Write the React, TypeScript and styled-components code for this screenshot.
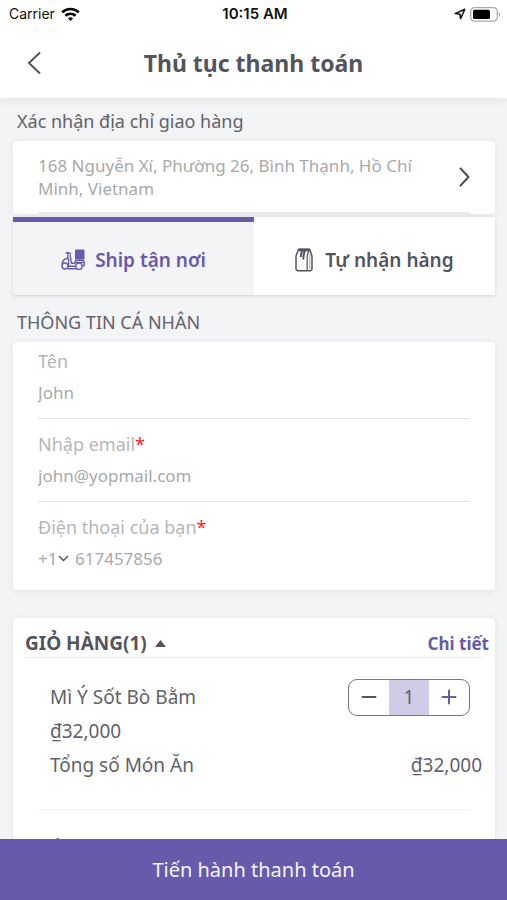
import React, { useState } from "react";
import styled, { createGlobalStyle } from "styled-components";

const color = {
  brand: "#675aac",
  brandSoft: "#d0cbe6",
  page: "#f3f4f6",
  text: "#54545e",
  body: "#626268",
  muted: "#a9a9ab",
  line: "#dedfe1",
};

const GlobalStyle = createGlobalStyle`
  * { box-sizing: border-box; }
  body { margin: 0; background: ${color.page}; }
  body, button, input, select { font-family: "Noto Sans", sans-serif; }
  h1, h2, p { margin: 0; font-weight: 400; }
  button { padding: 0; border: 0; background: none; color: inherit; font: inherit; cursor: pointer; }
  svg { display: block; flex: none; }
`;

const Screen = styled.div`
  display: flex;
  flex-direction: column;
  height: 100vh;
  background: ${color.page};
  color: ${color.text};
`;

const Top = styled.header`
  z-index: 1;
  background: #fff;
  box-shadow: 0 2px 8px rgba(40, 40, 60, 0.08);
`;

const StatusBar = styled.div`
  display: grid;
  grid-template-columns: 1fr auto 1fr;
  align-items: center;
  height: 28px;
  padding: 0 6px 0 9px;
  color: #111;
  font: 500 14px/20px Inter, sans-serif;
`;

const Carrier = styled.span`
  display: flex;
  align-items: center;
  gap: 6px;
  font-weight: 400;
`;

const Clock = styled.time`
  font-size: 15px;
  font-weight: 600;
`;

const StatusIcons = styled.span`
  display: flex;
  align-items: center;
  justify-content: flex-end;
  gap: 4px;
`;

const TitleBar = styled.div`
  display: grid;
  grid-template-columns: 56px 1fr 56px;
  align-items: center;
  height: 70px;
`;

const BackButton = styled.button`
  display: flex;
  padding-left: 27px;
`;

const Title = styled.h1`
  font-size: 23px;
  line-height: 32px;
  font-weight: 700;
  text-align: center;
`;

const Content = styled.main`
  flex: 1;
  min-height: 0;
  overflow-y: auto;
  scrollbar-width: none;
  padding: 0 12px 0 13px;
`;

const SectionTitle = styled.h2`
  padding: 11px 4px 7px;
  color: ${color.body};
  font-size: 18px;
  line-height: 25px;
`;

const Card = styled.section`
  border-radius: 4px;
  background: #fff;
  box-shadow: 0 1px 6px rgba(40, 40, 60, 0.09);
`;

const AddressCard = styled(Card)`
  padding: 0 25px;
`;

const AddressButton = styled.button`
  display: flex;
  align-items: center;
  justify-content: space-between;
  width: 100%;
  padding: 13px 0 12px;
  border-bottom: 2px solid #e9eaeb;
  color: ${color.muted};
  font-size: 17px;
  line-height: 23px;
  text-align: left;
`;

const AddressText = styled.span`
  max-width: 390px;
`;

const Tabs = styled.div`
  display: grid;
  grid-template-columns: 1fr 1fr;
  margin: 3px 0 4px;
  box-shadow: 0 1px 3px rgba(40, 40, 60, 0.16);
`;

const Tab = styled.button<{ $active: boolean }>`
  display: flex;
  align-items: center;
  justify-content: center;
  gap: 10px;
  height: 78px;
  padding-top: 3px;
  border-top: 5px solid ${(p) => (p.$active ? color.brand : "#fff")};
  background: ${(p) => (p.$active ? color.page : "#fff")};
  color: ${(p) => (p.$active ? color.brand : color.text)};
  font-size: 19px;
  line-height: 28px;
  font-weight: 600;
`;

const FormCard = styled(Card)`
  padding: 0 25px;
  margin-bottom: 28px;
`;

const Field = styled.div`
  padding: 7px 0 13px;

  & + & {
    padding-top: 13px;
    border-top: 1px solid ${color.line};
  }
`;

const Label = styled.label`
  display: block;
  color: #b6b6b8;
  font-size: 18px;
  line-height: 25px;
`;

const Required = styled.span`
  color: #ff1a1a;
`;

const Input = styled.input`
  display: block;
  flex: 1;
  width: 100%;
  min-width: 0;
  height: 25px;
  margin-top: 6px;
  padding: 0;
  border: 0;
  outline: 0;
  background: none;
  color: ${color.muted};
  font-size: 17px;
  line-height: 25px;
`;

const PhoneRow = styled.div`
  display: flex;
  align-items: center;
  padding-bottom: 6px;
`;

const CodeBox = styled.span`
  display: flex;
  align-items: center;
  margin: 6px 6px 0 0;
  color: ${color.text};
`;

const CodeSelect = styled.select`
  appearance: none;
  height: 25px;
  padding: 0;
  border: 0;
  background: none;
  color: ${color.muted};
  font-size: 17px;
`;

const CartHead = styled.div`
  display: flex;
  align-items: center;
  justify-content: space-between;
  margin: 0 12px;
  padding-top: 12px;
  border-bottom: 1px solid #ebecee;
`;

const CartToggle = styled.button`
  display: flex;
  align-items: center;
  gap: 8px;
  font-size: 19px;
  line-height: 27px;
  font-weight: 700;
`;

const DetailLink = styled.a`
  margin-right: -6px;
  color: ${color.brand};
  font-size: 17px;
  line-height: 25px;
  font-weight: 700;
  text-decoration: none;
`;

const CartBody = styled.div`
  padding: 22px 13px 20px 25px;
  color: ${color.body};
  font-size: 19px;
  line-height: 34px;
`;

const CartRow = styled.div`
  display: flex;
  align-items: center;
  justify-content: space-between;
  height: 34px;
  padding-left: 12px;
`;

const Stepper = styled.div`
  display: grid;
  grid-template-columns: 40px 40px 40px;
  height: 37px;
  margin-right: 12px;
  overflow: hidden;
  border: 1px solid #77777c;
  border-radius: 9px;
`;

const StepButton = styled.button<{ $accent?: boolean }>`
  display: grid;
  place-items: center;
  color: ${(p) => (p.$accent ? color.brand : color.text)};
`;

const Quantity = styled.output`
  display: grid;
  place-items: center;
  background: ${color.brandSoft};
`;

const Divider = styled.hr`
  height: 1px;
  margin: 27px 12px 23px 0;
  border: 0;
  background: #f0f0f2;
`;

const PayButton = styled.button`
  flex: none;
  height: 61px;
  background: ${color.brand};
  color: #f6f4fd;
  font-size: 20px;
  line-height: 28px;
`;

const WifiIcon = () => (
  <svg width="19" height="15" viewBox="0 0 19 15" fill="none" stroke="#000" strokeWidth="2.6" aria-hidden="true">
    <path d="M1.2 5.4C5.8 .9 13.2 .9 17.8 5.4" />
    <path d="M4.4 8.8c2.8-2.7 7.4-2.7 10.2 0" />
    <path d="M7 11.2c1.5-1.2 3.5-1.2 5 0l-2.5 2.7z" fill="#000" stroke="none" />
  </svg>
);

const LocationIcon = () => (
  <svg width="12" height="12" viewBox="0 0 12 12" fill="none" stroke="#111" strokeWidth="1.5" strokeLinejoin="round" aria-hidden="true">
    <path d="M10.8 1.2 6.6 10.6 6 6.2 1.2 5.6z" />
  </svg>
);

const BatteryIcon = () => (
  <svg width="31" height="15" viewBox="0 0 31 15" aria-hidden="true">
    <rect x=".7" y=".7" width="26.6" height="13.4" rx="3.8" fill="#fff" stroke="#a9a9a9" strokeWidth="1.3" />
    <rect x="3" y="2.8" width="17" height="9.2" rx="1.6" fill="#000" />
    <path d="M28.8 5c1.8.7 1.8 4.2 0 5z" fill="#a9a9a9" />
  </svg>
);

const BackIcon = () => (
  <svg width="14" height="24" viewBox="0 0 14 24" fill="none" stroke="currentColor" strokeWidth="2" aria-hidden="true">
    <path d="M13 1.5 2 12l11 10.5" />
  </svg>
);

const ForwardIcon = () => (
  <svg width="11" height="20" viewBox="0 0 11 20" fill="none" stroke="#4d4d53" strokeWidth="2" strokeLinecap="round" strokeLinejoin="round" aria-hidden="true">
    <path d="m1.5 1.5 8 8.5-8 8.5" />
  </svg>
);

const ScooterIcon = () => (
  <svg width="24" height="22" viewBox="0 0 24 22" fill="none" stroke="currentColor" strokeWidth="1.4" strokeLinejoin="round" aria-hidden="true">
    <rect x="14" y="0.5" width="9.5" height="10" rx="1.2" fill="currentColor" stroke="none" />
    <circle cx="4" cy="17" r="3" />
    <circle cx="18" cy="17.2" r="3.2" />
    <path d="M4.6 3.8h3.2l2.4 1.4M6.8 4.2v5C3.4 9.8 1.4 12 1 14.6M9.2 6l1.2 8.2h3.4l1-3h7.4c1.2 1.6 1.4 3.6.8 5.6h-1.4M7.6 9.6v7.6h6.8M7 19.8h8M14.4 13.4h8" />
  </svg>
);

const BagIcon = () => (
  <svg width="20" height="24" viewBox="0 0 20 24" fill="none" stroke="currentColor" strokeWidth="1.5" strokeLinejoin="round" aria-hidden="true">
    <path d="M3.6 1.2h11L17 8v13.2l-1.4 1.5H2.4L1 21.2V8z" />
    <path d="M3.8 2h10.6" strokeWidth="2.6" />
    <path d="M7.4 2.4C6.2 4.6 5.8 6.8 5.8 9M10 2.4C8.8 5 8.4 8 8.4 11.4" strokeWidth="2" />
    <path d="M14.2 2.6c-1.4 2-2 4.6-2 7.4v12" strokeWidth="1.2" />
    <path d="M14.8 6v15" strokeWidth="1" opacity=".5" />
  </svg>
);

const ChevronDown = () => (
  <svg width="11" height="7" viewBox="0 0 11 7" fill="none" stroke="currentColor" strokeWidth="1.5" aria-hidden="true">
    <path d="m1 1 4.5 4.5L10 1" />
  </svg>
);

const CaretUp = () => (
  <svg width="11" height="7" viewBox="0 0 11 7" fill="currentColor" aria-hidden="true">
    <path d="M5.5 0 11 7H0z" />
  </svg>
);

const SignIcon = ({ plus = false }: { plus?: boolean }) => (
  <svg width="16" height="16" viewBox="0 0 16 16" fill="none" stroke="currentColor" strokeWidth="2" strokeLinecap="round" aria-hidden="true">
    <path d={plus ? "M1.5 8h13M8 1.5v13" : "M1.5 8h13"} />
  </svg>
);

export default function App() {
  const [method, setMethod] = useState<"ship" | "pickup">("ship");
  const [quantity, setQuantity] = useState(1);
  const [open, setOpen] = useState(true);
  const total = `₫${(quantity * 32000).toLocaleString("en-US")}`;

  return (
    <>
      <GlobalStyle />
      <Screen>
        <Top>
          <StatusBar>
            <Carrier>
              Carrier
              <WifiIcon />
            </Carrier>
            <Clock>10:15 AM</Clock>
            <StatusIcons>
              <LocationIcon />
              <BatteryIcon />
            </StatusIcons>
          </StatusBar>
          <TitleBar>
            <BackButton aria-label="Quay lại">
              <BackIcon />
            </BackButton>
            <Title>Thủ tục thanh toán</Title>
          </TitleBar>
        </Top>

        <Content>
          <SectionTitle>Xác nhận địa chỉ giao hàng</SectionTitle>
          <AddressCard>
            <AddressButton>
              <AddressText>168 Nguyễn Xí, Phường 26, Bình Thạnh, Hồ Chí Minh, Vietnam</AddressText>
              <ForwardIcon />
            </AddressButton>
          </AddressCard>

          <Tabs role="tablist">
            <Tab role="tab" aria-selected={method === "ship"} $active={method === "ship"} onClick={() => setMethod("ship")}>
              <ScooterIcon />
              Ship tận nơi
            </Tab>
            <Tab role="tab" aria-selected={method === "pickup"} $active={method === "pickup"} onClick={() => setMethod("pickup")}>
              <BagIcon />
              Tự nhận hàng
            </Tab>
          </Tabs>

          <SectionTitle>THÔNG TIN CÁ NHÂN</SectionTitle>
          <FormCard>
            <Field>
              <Label htmlFor="name">Tên</Label>
              <Input id="name" defaultValue="John" />
            </Field>
            <Field>
              <Label htmlFor="email">
                Nhập email<Required>*</Required>
              </Label>
              <Input id="email" type="email" defaultValue="john@yopmail.com" />
            </Field>
            <Field>
              <Label htmlFor="phone">
                Điện thoại của bạn<Required>*</Required>
              </Label>
              <PhoneRow>
                <CodeBox>
                  <CodeSelect aria-label="Mã quốc gia" defaultValue="+1">
                    <option>+1</option>
                  </CodeSelect>
                  <ChevronDown />
                </CodeBox>
                <Input id="phone" type="tel" defaultValue="617457856" />
              </PhoneRow>
            </Field>
          </FormCard>

          <Card>
            <CartHead>
              <CartToggle aria-expanded={open} onClick={() => setOpen(!open)}>
                GIỎ HÀNG({quantity})
                <CaretUp />
              </CartToggle>
              <DetailLink href="#detail">Chi tiết</DetailLink>
            </CartHead>
            {open && (
              <CartBody>
                <CartRow>
                  <span>Mì Ý Sốt Bò Bằm</span>
                  <Stepper>
                    <StepButton aria-label="Giảm" onClick={() => setQuantity(Math.max(1, quantity - 1))}>
                      <SignIcon />
                    </StepButton>
                    <Quantity>{quantity}</Quantity>
                    <StepButton $accent aria-label="Tăng" onClick={() => setQuantity(quantity + 1)}>
                      <SignIcon plus />
                    </StepButton>
                  </Stepper>
                </CartRow>
                <CartRow>₫32,000</CartRow>
                <CartRow>
                  <span>Tổng số Món Ăn</span>
                  <span>{total}</span>
                </CartRow>
                <Divider />
                <CartRow>Áp dụng mã</CartRow>
              </CartBody>
            )}
          </Card>
        </Content>

        <PayButton>Tiến hành thanh toán</PayButton>
      </Screen>
    </>
  );
}
